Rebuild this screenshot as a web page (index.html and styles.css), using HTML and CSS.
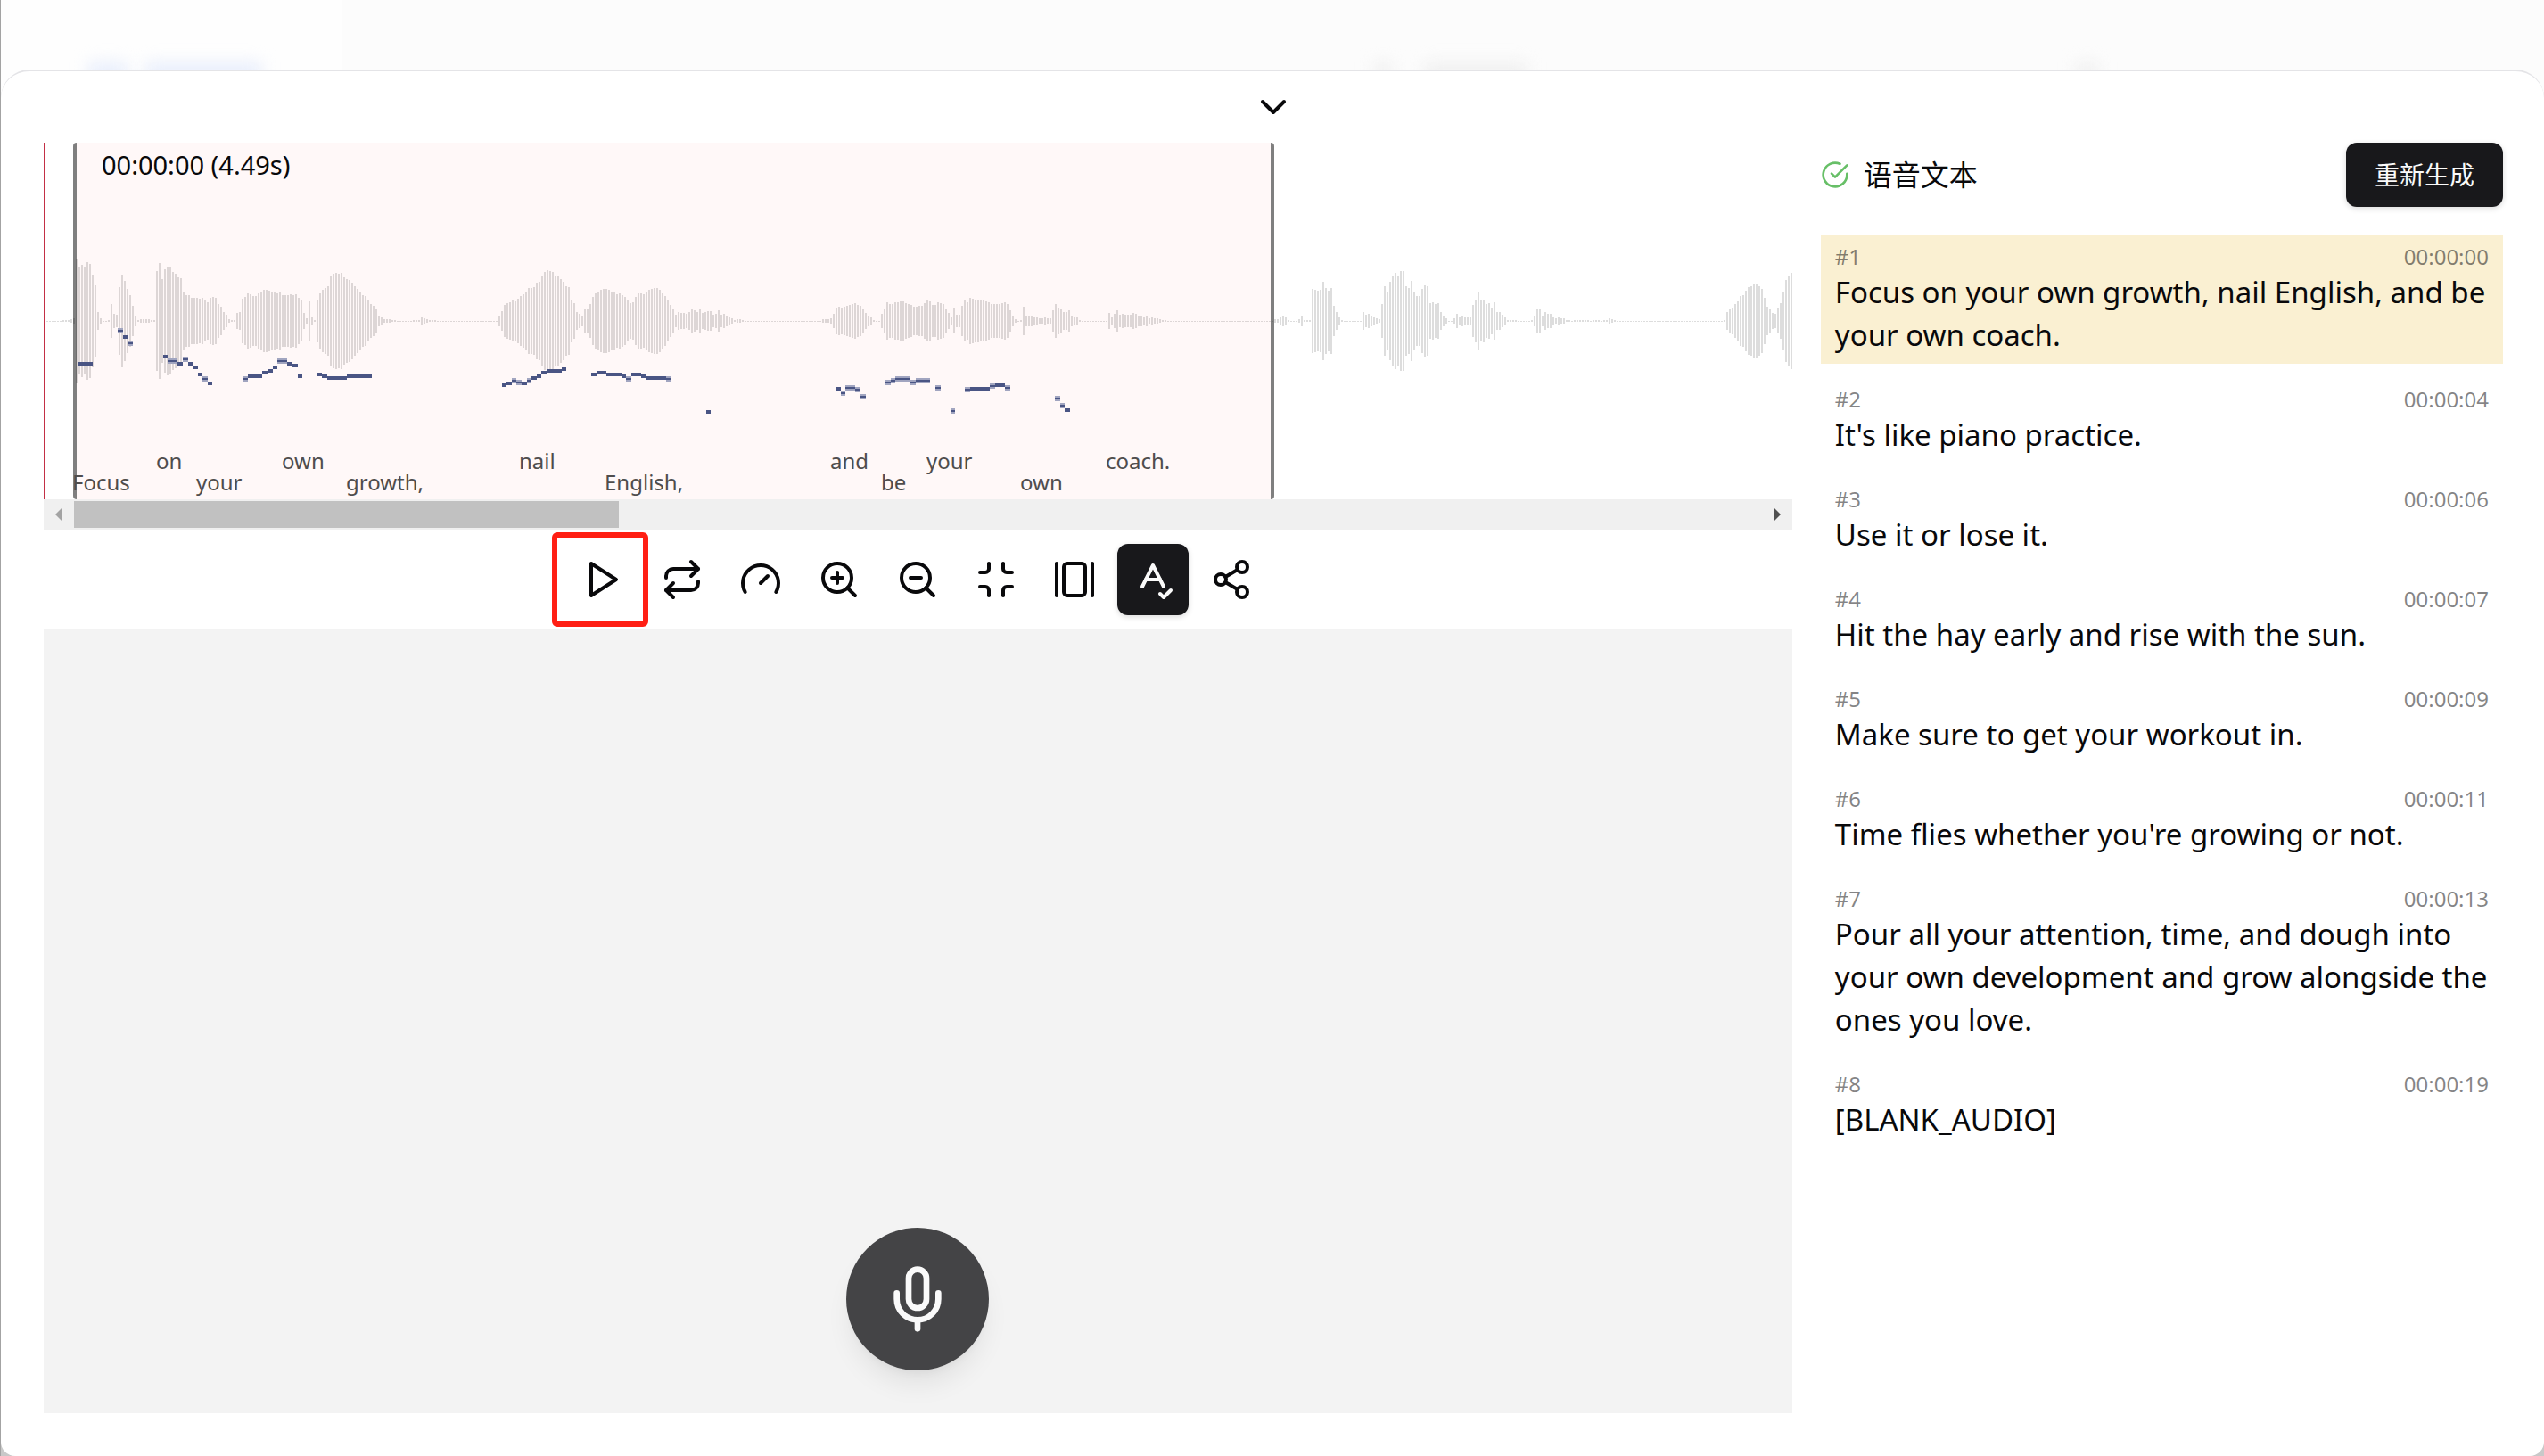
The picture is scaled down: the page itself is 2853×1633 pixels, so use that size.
FILE: index.html
```html
<!DOCTYPE html>
<html lang="zh-CN">
<head>
<meta charset="utf-8">
<title>语音文本</title>
<link rel="stylesheet" href="styles.css">
</head>
<body>
<div class="backdrop" aria-hidden="true">
  <div class="backdrop-side"></div>
  <div class="backdrop-main"></div>
  <span class="ghost ghost-logo"></span>
  <span class="ghost ghost-brand"></span>
  <span class="ghost ghost-dot"></span>
  <span class="ghost ghost-tab"></span>
  <span class="ghost ghost-mark"></span>
</div>

<main class="sheet">
  <header class="sheet-head">
    <button class="collapse" aria-label="收起">
      <svg class="icon" viewBox="0 0 24 24"><path d="m6 9 6 6 6-6"/></svg>
    </button>
  </header>

  <div class="columns">
    <section class="player">
      <div class="wave" id="wave">
        <svg class="wave-bars" width="1962" height="400"><path id="bars"/></svg>
        <div class="region">
          <span class="region-time">00:00:00 (4.49s)</span>
        </div>
        <svg class="wave-pitch" width="1962" height="400"><path id="pitch-soft" class="soft"/><path id="pitch" class="solid"/></svg>
        <span class="word low" style="left:32px">Focus</span>
        <span class="word" style="left:126px">on</span>
        <span class="word low" style="left:171px">your</span>
        <span class="word" style="left:267px">own</span>
        <span class="word low" style="left:339px">growth,</span>
        <span class="word" style="left:533px">nail</span>
        <span class="word low" style="left:629px">English,</span>
        <span class="word" style="left:882px">and</span>
        <span class="word low" style="left:939px">be</span>
        <span class="word" style="left:990px">your</span>
        <span class="word low" style="left:1095px">own</span>
        <span class="word" style="left:1191px">coach.</span>
        <div class="cursor"></div>
      </div>
      <div class="scrollbar" aria-hidden="true">
        <span class="arrow arrow-left"></span>
        <div class="track"><div class="thumb"></div></div>
        <span class="arrow arrow-right"></span>
      </div>

      <div class="toolbar">
        <button class="tool tool-play" aria-label="播放">
          <svg class="icon" viewBox="0 0 24 24"><path d="m5 3 14 9-14 9V3z"/></svg>
        </button>
        <button class="tool" aria-label="循环">
          <svg class="icon" viewBox="0 0 24 24"><path d="m17 2 4 4-4 4"/><path d="M3 11v-1a4 4 0 0 1 4-4h14"/><path d="m7 22-4-4 4-4"/><path d="M21 13v1a4 4 0 0 1-4 4H3"/></svg>
        </button>
        <button class="tool" aria-label="速度">
          <svg class="icon" viewBox="0 0 24 24"><path d="m12 14 4-4"/><path d="M3.34 19a10 10 0 1 1 17.32 0"/></svg>
        </button>
        <button class="tool" aria-label="放大">
          <svg class="icon" viewBox="0 0 24 24"><circle cx="11" cy="11" r="8"/><path d="m21 21-4.35-4.35M11 8v6M8 11h6"/></svg>
        </button>
        <button class="tool" aria-label="缩小">
          <svg class="icon" viewBox="0 0 24 24"><circle cx="11" cy="11" r="8"/><path d="m21 21-4.35-4.35M8 11h6"/></svg>
        </button>
        <button class="tool" aria-label="适应">
          <svg class="icon" viewBox="0 0 24 24"><path d="M8 3v3a2 2 0 0 1-2 2H3"/><path d="M21 8h-3a2 2 0 0 1-2-2V3"/><path d="M3 16h3a2 2 0 0 1 2 2v3"/><path d="M16 21v-3a2 2 0 0 1 2-2h3"/></svg>
        </button>
        <button class="tool" aria-label="片段">
          <svg class="icon" viewBox="0 0 24 24"><path d="M2 3v18"/><rect width="12" height="18" x="6" y="3" rx="2"/><path d="M22 3v18"/></svg>
        </button>
        <button class="tool active" aria-label="校对" aria-pressed="true">
          <svg class="icon" viewBox="0 0 24 24"><path d="m6 16 6-12 6 12"/><path d="M8 12h8"/><path d="m16 20 2 2 4-4"/></svg>
        </button>
        <button class="tool" aria-label="分享">
          <svg class="icon" viewBox="0 0 24 24"><circle cx="18" cy="5" r="3"/><circle cx="6" cy="12" r="3"/><circle cx="18" cy="19" r="3"/><path d="m8.59 13.51 6.83 3.98M15.41 6.51l-6.82 3.98"/></svg>
        </button>
      </div>

      <div class="recorder">
        <button class="mic" aria-label="录音">
          <svg class="icon" viewBox="0 0 24 24"><path d="M12 2a3 3 0 0 0-3 3v7a3 3 0 0 0 6 0V5a3 3 0 0 0-3-3Z"/><path d="M19 10v2a7 7 0 0 1-14 0v-2"/><path d="M12 19v3"/></svg>
        </button>
      </div>
    </section>

    <aside class="transcript">
      <div class="transcript-head">
        <svg class="icon done" viewBox="0 0 24 24"><path d="M22 11.08V12a10 10 0 1 1-5.93-9.14"/><path d="m9 11 3 3L22 4"/></svg>
        <h1>语音文本</h1>
        <button class="regen">重新生成</button>
      </div>
      <ol class="lines">
        <li class="line current"><div class="meta"><span>#1</span><time>00:00:00</time></div><p>Focus on your own growth, nail English, and be your own coach.</p></li>
        <li class="line"><div class="meta"><span>#2</span><time>00:00:04</time></div><p>It's like piano practice.</p></li>
        <li class="line"><div class="meta"><span>#3</span><time>00:00:06</time></div><p>Use it or lose it.</p></li>
        <li class="line"><div class="meta"><span>#4</span><time>00:00:07</time></div><p>Hit the hay early and rise with the sun.</p></li>
        <li class="line"><div class="meta"><span>#5</span><time>00:00:09</time></div><p>Make sure to get your workout in.</p></li>
        <li class="line"><div class="meta"><span>#6</span><time>00:00:11</time></div><p>Time flies whether you're growing or not.</p></li>
        <li class="line"><div class="meta"><span>#7</span><time>00:00:13</time></div><p>Pour all your attention, time, and dough into your own development and grow alongside the ones you love.</p></li>
        <li class="line"><div class="meta"><span>#8</span><time>00:00:19</time></div><p>[BLANK_AUDIO]</p></li>
      </ol>
    </aside>
  </div>
</main>
<script src="wave.js"></script>
</body>
</html>
```

FILE: styles.css
```css
*, *::before, *::after { box-sizing: border-box; }

body {
  margin: 0;
  min-height: 100vh;
  display: flex;
  flex-direction: column;
  background: #c9c9c9;
  color: #09090b;
  font-family: "Noto Sans", "Noto Sans CJK SC", sans-serif;
  font-size: 33px;
  line-height: 48px;
  border-left: 1px solid #a3a3a3;
}

button {
  border: 0;
  padding: 0;
  background: none;
  color: inherit;
  font: inherit;
}

.icon {
  display: block;
  width: 48px;
  height: 48px;
  fill: none;
  stroke: currentColor;
  stroke-width: 2;
  stroke-linecap: round;
  stroke-linejoin: round;
}

/* Page behind the sheet */
.backdrop {
  position: absolute;
  inset: 0 0 auto 1px;
  height: 120px;
  display: flex;
  overflow: hidden;
}
.backdrop-side { width: 382px; background: #fefefe; }
.backdrop-main { flex: 1; background: #fcfcfc; }
.ghost { position: absolute; top: 70px; height: 24px; filter: blur(9px); background: #f0f0f0; }
.ghost-logo { left: 98px; width: 44px; background: #e8eefc; }
.ghost-brand { left: 162px; width: 130px; background: #e8eefc; }
.ghost-dot { left: 1540px; width: 20px; }
.ghost-tab { left: 1596px; width: 116px; }
.ghost-mark { left: 2328px; width: 24px; }

/* Sheet */
.sheet {
  position: relative;
  flex: 1;
  display: flex;
  flex-direction: column;
  margin-top: 78px;
  padding: 0 46px 48px 48px;
  border-top: 2px solid #e4e4e7;
  border-radius: 32px 32px 16px 16px;
  background: #fff;
}
.sheet-head {
  display: flex;
  justify-content: center;
  align-items: center;
  height: 80px;
}
.columns {
  flex: 1;
  display: grid;
  grid-template-columns: repeat(7, 1fr);
  gap: 32px;
}
.player {
  grid-column: span 5;
  min-width: 0;
  display: flex;
  flex-direction: column;
}

/* Waveform */
.wave { position: relative; height: 400px; overflow: hidden; }
.wave-bars, .wave-pitch { position: absolute; top: 0; left: 0; }
.wave-bars { fill: #dddddd; }
.soft { fill: #a1a5c0; }
.solid { fill: #4a5584; }
.region {
  position: absolute;
  top: 0;
  bottom: 0;
  left: 33px;
  width: 1347px;
  padding: 0 28px;
  border: solid rgba(0, 0, 0, 0.5);
  border-width: 0 4px;
  border-radius: 4px;
  background: rgba(255, 0, 0, 0.027);
  background-clip: padding-box;
}
.region-time { font-size: 29px; }
.word {
  position: absolute;
  bottom: 27px;
  color: #4f4d4d;
  font-size: 24px;
  line-height: 32px;
}
.word.low { bottom: 3px; }
.cursor { position: absolute; inset: 0 auto 0 0; width: 2px; background: #c32f45; }

.scrollbar { display: flex; height: 34px; background: #f0f0f0; }
.arrow { display: flex; width: 34px; align-items: center; justify-content: center; }
.arrow::before { content: ""; border: 8px solid transparent; }
.arrow-left::before { border-left-width: 0; border-right-color: #a3a3a3; }
.arrow-right::before { border-right-width: 0; border-left-color: #505050; }
.track { flex: 1; padding: 2px 0; }
.thumb { width: 611px; height: 30px; background: #c1c1c1; }

/* Toolbar */
.toolbar {
  display: flex;
  justify-content: center;
  gap: 8px;
  padding: 16px 0;
}
.tool {
  position: relative;
  display: flex;
  align-items: center;
  justify-content: center;
  width: 80px;
  height: 80px;
  border-radius: 12px;
}
.tool.active { background: #18181b; color: #fafafa; box-shadow: 0 2px 6px rgba(0, 0, 0, 0.15); }
.tool-play::after {
  content: "";
  position: absolute;
  top: -13px;
  left: -18px;
  width: 108px;
  height: 106px;
  border: 6px solid #ff1f14;
  border-radius: 6px;
}

/* Recorder */
.recorder {
  flex: 1;
  display: flex;
  justify-content: center;
  align-items: flex-end;
  padding-bottom: 48px;
  background: #f3f3f3;
}
.mic {
  display: flex;
  align-items: center;
  justify-content: center;
  width: 160px;
  height: 160px;
  border-radius: 50%;
  background: #444446;
  color: #fafafa;
  box-shadow: 0 20px 30px -6px rgba(0, 0, 0, 0.08), 0 8px 12px -8px rgba(0, 0, 0, 0.08);
}
.mic .icon { width: 80px; height: 80px; }

/* Transcript */
.transcript {
  grid-column: span 2;
  display: flex;
  flex-direction: column;
  gap: 32px;
}
.transcript-head { display: flex; align-items: center; gap: 16px; height: 72px; }
.done { width: 32px; height: 32px; color: #67bf67; }
h1 { margin: 0; font-size: 32px; font-weight: 400; }
.regen {
  height: 72px;
  margin-left: auto;
  padding: 0 32px;
  border-radius: 12px;
  background: #18181b;
  color: #fafafa;
  font-size: 28px;
  font-weight: 400;
  box-shadow: 0 2px 6px rgba(0, 0, 0, 0.15);
}
.lines { margin: 0; padding: 0; list-style: none; display: flex; flex-direction: column; gap: 16px; }
.line { padding: 8px 16px; }
.line.current { background: #faf0d2; }
.line p { margin: 0; }
.meta {
  display: flex;
  justify-content: space-between;
  font-size: 24px;
  line-height: 32px;
  color: rgba(9, 9, 11, 0.5);
}
```

FILE: wave.js
```js
// Half-height of each bar in pixels; "0xN" repeats a silent bar N times.
const peaks = `0x7 1 1 1 2 3 70 60 63 60 66 64 52 40 10 3 0x2 1 19 8 7 38 52 45 36 29 17 6 1 2 2 2 2 1 1
56 65 47 58 61 60 55 53 49 48 32 29 29 26 26 26 25 26 23 21 26 27 26 19 16 10 7 2 1 1 9 10 25 27 31 30 28 28
31 32 35 35 34 33 32 31 32 29 29 29 30 29 30 26 23 9 3 22 4 1 24 31 35 37 39 50 53 54 53 54 49 47 46 43 39 36
33 29 28 23 19 17 13 6 4 2 2 2 1 1 0x6 1 1 1 4 3 2 1 1 1 0x23
6 11 18 20 21 23 22 25 28 30 32 37 37 38 43 44 51 55 57 56 55 51 51 47 44 39 38 24 20 10 8 6 13 13 19 27 31
33 35 36 36 35 33 32 30 31 29 27 23 20 21 27 31 31 30 32 35 36 37 37 35 31 28 23 18 13 7 10 9 9 8 10 13 12 10
13 9 10 11 11 7 8 12 7 8 6 4 3 1 2 2 1 0x29 2 2 2 3 8 15 16 15 16 17 18 19 20 18 17 13 9 6 4 1 0x2
8 13 21 19 19 21 21 22 22 20 19 18 16 16 17 17 20 23 22 18 18 21 20 19 13 9 4 14 7 7 17 23 21 26 25 24 24 23
23 22 21 19 19 19 19 20 21 19 12 6 2 0x1 1 16 6 6 6 4 5 3 3 4 3 3 12 19 15 13 10 10 12 6 5 5 1 0x10
9 4 8 12 7 8 7 7 7 9 8 6 6 4 6 3 4 3 3 2 1 1 0x40 2 2 4 6 4 1 0x3 2 6 1 1 1 36 35 34 35 44 37 34 37 17 10 4 1
0x7 10 7 8 6 4 3 2 19 39 33 44 50 54 50 56 56 39 37 45 32 28 28 36 40 39 20 21 19 20 10 6 3 0x2 3 8 4 6 5 4 5
18 24 32 23 24 19 20 15 21 10 10 7 4 1 1 1 1 0x5 1 6 13 13 6 10 8 8 5 3 4 3 3 1 1 0x1 1 1 1 1 1 1 0x1 1 1 1 0x1
1 1 3 2 1 0x40 1 10 13 15 19 22 28 29 34 38 39 41 41 39 36 26 16 13 9 8 14 20 33 46 51 54`
  .split(/\s+/)
  .flatMap((p) => (p.startsWith('0x') ? Array(Number(p.slice(2))).fill(0) : [Number(p)]));

const box = (x, y, w, h) => `M${x} ${y}h${w}v${h}h${-w}z`;

document.getElementById('bars').setAttribute(
  'd',
  peaks.map((p, i) => (p ? box(i * 3, 200 - p, 2, p * 2) : box(i * 3, 200, 2, 1))).join('')
);

// Pitch contour: [x, y, width], sharp steps and steps that fall between two levels.
const sharp = [
  [39,246,16],[89,216,5],[134,238,5],[150,246,6],[162,246,5],[167,250,6],[173,258,5],[184,268,5],
  [229,260,16],[245,256,6],[251,254,6],[257,250,5],[273,246,6],[279,248,6],[285,260,5],
  [307,258,5],[312,260,6],[318,262,22],[340,260,28],
  [514,270,5],[519,268,6],[536,268,6],[547,262,6],[553,260,5],[558,256,6],[564,254,17],[581,252,5],
  [614,258,6],[620,256,11],[631,258,17],[648,260,5],[659,258,11],[670,260,6],[676,262,22],
  [743,300,5],[888,274,6],[1039,274,22],[1067,270,11],[1145,298,6]
];
const between = [
  [83,208,6],[94,222,6],[139,242,11],[156,240,6],[178,262,6],[223,262,6],[262,242,11],
  [525,264,5],[530,266,6],[542,264,5],[653,262,6],[698,262,6],
  [894,278,5],[899,272,11],[910,274,6],[916,282,6],
  [944,266,6],[950,264,5],[955,262,17],[972,266,6],[978,264,16],[1000,272,6],[1017,298,5],
  [1033,274,6],[1061,270,6],[1078,272,6],[1134,284,6],[1140,292,5]
];

document.getElementById('pitch-soft').setAttribute('d', between.map(([x, y, w]) => box(x, y, w, 6)).join(''));
document.getElementById('pitch').setAttribute(
  'd',
  sharp.map(([x, y, w]) => box(x, y, w, 4)).join('') + between.map(([x, y, w]) => box(x, y + 2, w, 2)).join('')
);
```
